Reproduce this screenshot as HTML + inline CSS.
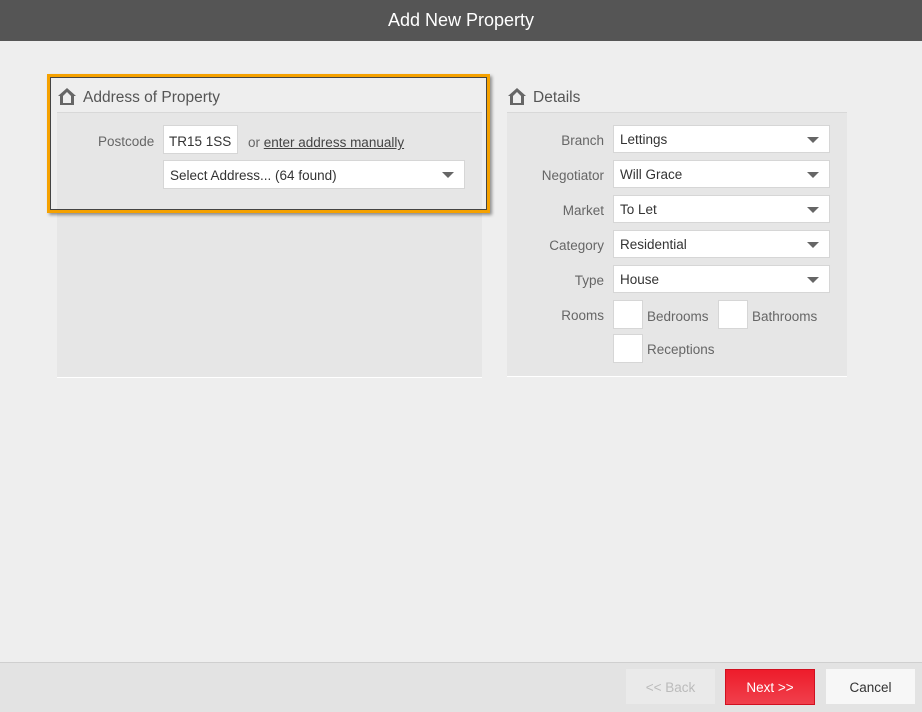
<!DOCTYPE html><html><head><style>
*{margin:0;padding:0;box-sizing:border-box}
body{width:922px;height:712px;background:#eeeeee;font-family:"Liberation Sans",sans-serif;font-size:13.5px;color:#333;position:relative;overflow:hidden}
.a{position:absolute}
.top{left:0;top:0;width:922px;height:41px;background:#555;color:#fff;font-size:18px;text-align:center;line-height:40px}
.panel{background:#e6e6e6;border-bottom:1px solid #fff}
.hdr{background:#eee;border-bottom:1px solid #d8d8d8;font-size:15.5px;color:#555}
.box{background:#fff;border:1px solid #d6d6d6}
.lbl{color:#666;text-align:right;width:100px}
.sel{background:#fff;border:1px solid #d6d6d6;padding-left:6px;line-height:28px;height:28px}
.sel:after{content:"";position:absolute;right:10px;top:11px;border-left:6px solid transparent;border-right:6px solid transparent;border-top:6px solid #666}
.rl{color:#666}
</style></head><body>
<div class="a top">Add New Property</div>

<div class="a panel" style="left:57px;top:80px;width:425px;height:298px"></div>
<div class="a hdr" style="left:57px;top:80px;width:425px;height:33px"></div>
<svg class="a" style="left:57px;top:86px" width="20" height="20" viewBox="0 0 20 20"><path d="M10 2 L1 10 L3 10 L3 19 L17 19 L17 10 L19 10 Z M6 10 L10 6 L14 10 L14 17 L6 17 Z" fill="#666" fill-rule="evenodd"/></svg>
<div class="a" style="left:83px;top:89px;font-size:15.5px;color:#555">Address of Property</div>
<div class="a" style="left:47px;top:74px;width:443px;height:139px;border:3px solid #f5a100;box-shadow:inset 0 0 0 1px #444,2px 2px 3px rgba(0,0,0,.4)"></div>
<div class="a rl" style="left:98px;top:134px">Postcode</div>
<div class="a box" style="left:163px;top:125px;width:75px;height:29px;padding:8px 0 0 5px">TR15 1SS</div>
<div class="a" style="left:248px;top:135px;color:#666">or <span style="text-decoration:underline;color:#444">enter address manually</span></div>
<div class="a sel" style="left:163px;top:160px;width:302px;height:29px;line-height:30px">Select Address... (64 found)</div>

<div class="a panel" style="left:507px;top:80px;width:340px;height:297px"></div>
<div class="a hdr" style="left:507px;top:80px;width:340px;height:33px"></div>
<svg class="a" style="left:507px;top:86px" width="20" height="20" viewBox="0 0 20 20"><path d="M10 2 L1 10 L3 10 L3 19 L17 19 L17 10 L19 10 Z M6 10 L10 6 L14 10 L14 17 L6 17 Z" fill="#666" fill-rule="evenodd"/></svg>
<div class="a" style="left:533px;top:89px;font-size:15.5px;color:#555">Details</div>

<div class="a lbl" style="left:504px;top:133px">Branch</div><div class="a sel" style="left:613px;top:125px;width:217px">Lettings</div>
<div class="a lbl" style="left:504px;top:168px">Negotiator</div><div class="a sel" style="left:613px;top:160px;width:217px">Will Grace</div>
<div class="a lbl" style="left:504px;top:203px">Market</div><div class="a sel" style="left:613px;top:195px;width:217px">To Let</div>
<div class="a lbl" style="left:504px;top:238px">Category</div><div class="a sel" style="left:613px;top:230px;width:217px">Residential</div>
<div class="a lbl" style="left:504px;top:273px">Type</div><div class="a sel" style="left:613px;top:265px;width:217px">House</div>
<div class="a lbl" style="left:504px;top:308px">Rooms</div>
<div class="a box" style="left:613px;top:300px;width:30px;height:29px"></div><div class="a rl" style="left:647px;top:309px">Bedrooms</div>
<div class="a box" style="left:718px;top:300px;width:30px;height:29px"></div><div class="a rl" style="left:752px;top:309px">Bathrooms</div>
<div class="a box" style="left:613px;top:334px;width:30px;height:29px"></div><div class="a rl" style="left:647px;top:342px">Receptions</div>

<div class="a" style="left:0;top:662px;width:922px;height:50px;background:#e3e3e3;border-top:1px solid #cfcfcf"></div>
<div class="a" style="left:626px;top:669px;width:89px;height:35px;background:#eaeaea;color:#bbb;text-align:center;line-height:37px">&lt;&lt; Back</div>
<div class="a" style="left:725px;top:669px;width:90px;height:36px;background:linear-gradient(#ee1c2b,#f0404c);border:1px solid #d01020;color:#fff;text-align:center;line-height:36px">Next &gt;&gt;</div>
<div class="a" style="left:826px;top:669px;width:89px;height:35px;background:#f7f7f7;color:#333;text-align:center;line-height:37px">Cancel</div>
</body></html>
